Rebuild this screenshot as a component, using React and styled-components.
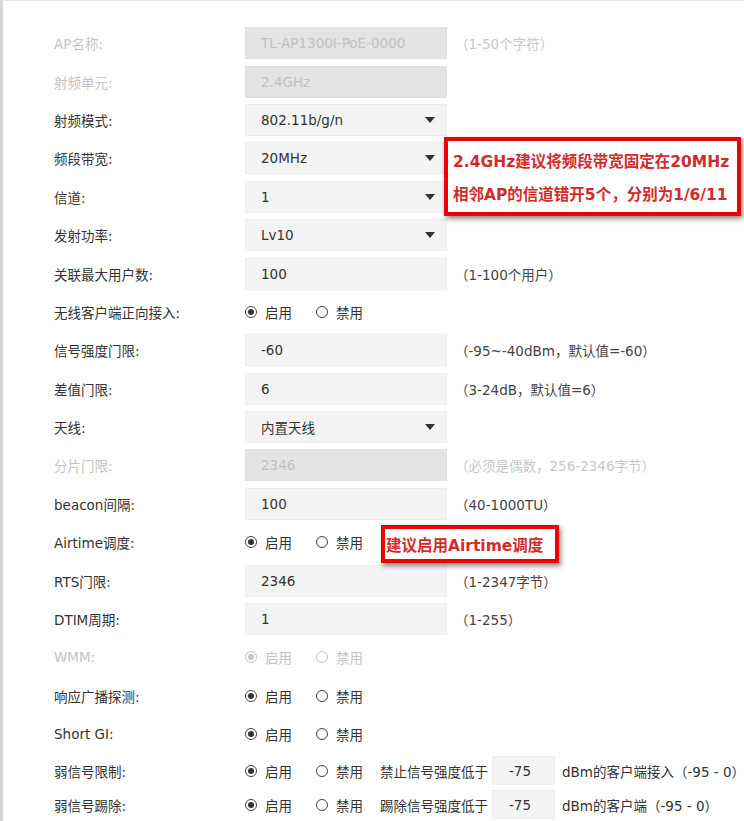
import React from 'react'
import styled, { createGlobalStyle } from 'styled-components'

const Global = createGlobalStyle`
  body {
    margin: 0;
    background: #fff;
    font-family: "DejaVu Sans", "Noto Sans CJK SC", sans-serif;
    font-size: 13.5px;
    color: #333;
  }
`

const Panel = styled.div`
  position: relative;
  width: 744px;
  height: 821px;
  overflow: hidden;
  border-left: 3px solid #d6d6d6;
  border-top: 1px solid #e6e6e6;
  padding: 23px 0 0 51px;
  box-sizing: border-box;
`

const Row = styled.div`
  display: flex;
  align-items: center;
  height: ${p => p.$h || 38.4}px;
`

const Label = styled.div`
  width: 191px;
  flex: none;
  color: ${p => (p.$disabled ? '#c4c4c4' : '#333')};
`

const Field = styled.div`
  width: 202px;
  height: 32px;
  flex: none;
  box-sizing: border-box;
  display: flex;
  align-items: center;
  justify-content: space-between;
  padding: 0 11px 0 15px;
  background: ${p => (p.$disabled ? '#e4e4e4' : '#f4f4f4')};
  border: 1px solid ${p => (p.$disabled ? '#e0e0e0' : '#ececec')};
  color: ${p => (p.$disabled ? '#c2c2c2' : '#333')};
`

const Arrow = styled.span`
  width: 0;
  height: 0;
  border-left: 5px solid transparent;
  border-right: 5px solid transparent;
  border-top: 6px solid #333;
`

const Hint = styled.div`
  margin-left: 8px;
  color: ${p => (p.$disabled ? '#c8c8c8' : '#444')};
  white-space: nowrap;
`

const Radios = styled.div`
  display: flex;
  align-items: center;
  gap: 24px;
  flex: none;
`

const Option = styled.span`
  display: inline-flex;
  align-items: center;
  gap: 8px;
  color: ${p => (p.$disabled ? '#c4c4c4' : '#333')};
`

const Circle = styled.span`
  width: 12px;
  height: 12px;
  box-sizing: border-box;
  border-radius: 50%;
  border: 1.5px solid ${p => (p.$disabled ? '#c4c4c4' : '#444')};
  display: inline-flex;
  align-items: center;
  justify-content: center;
  &::after {
    content: '';
    width: 6px;
    height: 6px;
    border-radius: 50%;
    background: ${p => (p.$checked ? (p.$disabled ? '#c4c4c4' : '#333') : 'transparent')};
  }
`

const Extra = styled.div`
  display: flex;
  align-items: center;
  flex: none;
  margin-left: 17px;
  white-space: nowrap;
`

const SmallBox = styled.div`
  width: 63px;
  height: 29px;
  margin: 0 7px 0 4px;
  box-sizing: border-box;
  padding-left: 16px;
  display: flex;
  align-items: center;
  background: #f4f4f4;
  border: 1px solid #ececec;
`

const Note = styled.div`
  position: absolute;
  left: ${p => p.$left}px;
  top: ${p => p.$top}px;
  width: ${p => p.$w}px;
  height: ${p => p.$hgt}px;
  box-sizing: border-box;
  border: 4px solid #f00000;
  box-shadow: 2px 3px 5px rgba(0, 0, 0, 0.45);
  padding: ${p => p.$pad};
  display: flex;
  flex-direction: column;
  justify-content: space-around;
  font-weight: bold;
  font-size: 15.5px;
  color: #d22b2b;
  white-space: nowrap;
`

const rows = [
  { label: 'AP名称:', kind: 'input', value: 'TL-AP1300I-PoE-0000', disabled: true, hint: '（1-50个字符）' },
  { label: '射频单元:', kind: 'input', value: '2.4GHz', disabled: true },
  { label: '射频模式:', kind: 'select', value: '802.11b/g/n' },
  { label: '频段带宽:', kind: 'select', value: '20MHz' },
  { label: '信道:', kind: 'select', value: '1' },
  { label: '发射功率:', kind: 'select', value: 'Lv10' },
  { label: '关联最大用户数:', kind: 'input', value: '100', hint: '（1-100个用户）' },
  { label: '无线客户端正向接入:', kind: 'radio' },
  { label: '信号强度门限:', kind: 'input', value: '-60', hint: '（-95~-40dBm，默认值=-60）' },
  { label: '差值门限:', kind: 'input', value: '6', hint: '（3-24dB，默认值=6）' },
  { label: '天线:', kind: 'select', value: '内置天线' },
  { label: '分片门限:', kind: 'input', value: '2346', disabled: true, hint: '（必须是偶数，256-2346字节）' },
  { label: 'beacon间隔:', kind: 'input', value: '100', hint: '（40-1000TU）' },
  { label: 'Airtime调度:', kind: 'radio' },
  { label: 'RTS门限:', kind: 'input', value: '2346', hint: '（1-2347字节）' },
  { label: 'DTIM周期:', kind: 'input', value: '1', hint: '（1-255）' },
  { label: 'WMM:', kind: 'radio', disabled: true },
  { label: '响应广播探测:', kind: 'radio' },
  { label: 'Short GI:', kind: 'radio' },
  { label: '弱信号限制:', kind: 'radio', h: 35, extra: ['禁止信号强度低于', '-75', 'dBm的客户端接入（-95 - 0）'] },
  { label: '弱信号踢除:', kind: 'radio', h: 33, extra: ['踢除信号强度低于', '-75', 'dBm的客户端（-95 - 0）'] },
]

function RadioPair({ disabled }) {
  return (
    <Radios>
      <Option $disabled={disabled}>
        <Circle $checked $disabled={disabled} />启用
      </Option>
      <Option $disabled={disabled}>
        <Circle $disabled={disabled} />禁用
      </Option>
    </Radios>
  )
}

export default function App() {
  return (
    <>
      <Global />
      <Panel>
        {rows.map((r, i) => (
          <Row key={i} $h={r.h}>
            <Label $disabled={r.disabled}>{r.label}</Label>
            {r.kind === 'radio' ? (
              <RadioPair disabled={r.disabled} />
            ) : (
              <Field $disabled={r.disabled}>
                <span>{r.value}</span>
                {r.kind === 'select' && <Arrow />}
              </Field>
            )}
            {r.hint && <Hint $disabled={r.disabled}>{r.hint}</Hint>}
            {r.extra && (
              <Extra>
                {r.extra[0]}
                <SmallBox>{r.extra[1]}</SmallBox>
                {r.extra[2]}
              </Extra>
            )}
          </Row>
        ))}
        <Note $left={441} $top={136} $w={297} $hgt={79} $pad="2px 0 2px 5px">
          <div>2.4GHz建议将频段带宽固定在20MHz</div>
          <div>相邻AP的信道错开5个，分别为1/6/11</div>
        </Note>
        <Note $left={378} $top={524} $w={178} $hgt={38} $pad="0 0 0 1px">
          <div>建议启用Airtime调度</div>
        </Note>
      </Panel>
    </>
  )
}
